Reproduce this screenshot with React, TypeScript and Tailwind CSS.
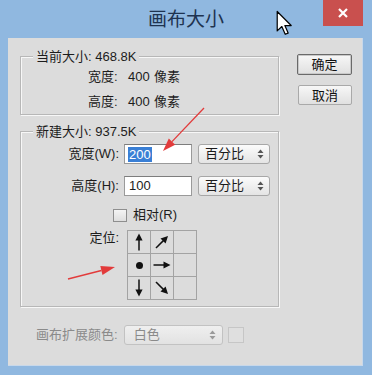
import React from 'react';

const font = "font-['Liberation_Sans','Noto_Sans_CJK_SC',sans-serif]";

function UpDown({ color = '#555' }: { color?: string }) {
  return (
    <svg width="7" height="10" viewBox="0 0 7 10">
      <polygon points="3.5,0.5 6.5,4 0.5,4" fill={color} />
      <polygon points="3.5,9.5 6.5,6 0.5,6" fill={color} />
    </svg>
  );
}

function Arrow({ rot }: { rot: number }) {
  return (
    <svg width="22" height="22" viewBox="0 0 22 22">
      <g transform={`rotate(${rot} 11 11)`}>
        <line x1="11" y1="19.5" x2="11" y2="8" stroke="#111" strokeWidth="1.5" />
        <polygon points="11,2.5 7.4,9.5 14.6,9.5" fill="#111" />
      </g>
    </svg>
  );
}

function Select({ label, w }: { label: string; w: string }) {
  return (
    <div
      className={`${w} h-[20px] flex items-center justify-between pl-[6px] pr-[5px] rounded-[3px] border border-[#a7a7a7] bg-gradient-to-b from-[#fbfbfb] to-[#e4e4e4] text-[13px] text-[#1a1a1a]`}
    >
      <span>{label}</span>
      <UpDown />
    </div>
  );
}

function Group({ legend, h, children }: { legend: string; h: string; children: React.ReactNode }) {
  return (
    <div
      className={`relative ${h} border border-[#b7b7b7] shadow-[inset_1px_1px_0_#f7f7f7,1px_1px_0_#f7f7f7]`}
    >
      <span className="absolute -top-[8px] left-[12px] px-[3px] bg-[#dcdcdc] text-[13px] leading-[16px] text-[#1c1c1c]">
        {legend}
      </span>
      {children}
    </div>
  );
}

export default function App() {
  const cells: (number | 'dot' | null)[] = [0, 45, null, 'dot', 90, null, 180, 135, null];

  return (
    <div className={`relative w-[372px] h-[375px] bg-[#90b8e0] flex flex-col ${font}`}>
      {/* Title bar */}
      <div className="h-[38px] flex items-center justify-center">
        <span className="text-[19px] text-[#1e3350] mt-[3px]">画布大小</span>
      </div>
      <div className="absolute right-[9px] top-0 w-[40px] h-[26px] bg-[#c9504e] flex items-center justify-center">
        <svg width="10" height="10" viewBox="0 0 10 10">
          <path d="M1 1L9 9M9 1L1 9" stroke="#fff" strokeWidth="2.2" />
        </svg>
      </div>

      {/* Client area */}
      <div className="ml-[8px] w-[355px] h-[328px] bg-[#dcdcdc] border-r border-b border-[#c8d8ea] flex pt-[16px] pl-[12px] text-[13px] text-[#1c1c1c]">
        {/* Left column */}
        <div className="w-[259px] pt-[2px] flex flex-col">
          <Group legend="当前大小: 468.8K" h="h-[59px]">
            <div className="pt-[10px] pl-[67px] flex flex-col gap-[5px]">
              <div className="h-[20px] flex items-center">
                <span className="w-[40px]">宽度:</span>
                <span className="w-[26px]">400</span>
                <span>像素</span>
              </div>
              <div className="h-[20px] flex items-center">
                <span className="w-[40px]">高度:</span>
                <span className="w-[26px]">400</span>
                <span>像素</span>
              </div>
            </div>
          </Group>

          <div className="mt-[16px]">
            <Group legend="新建大小: 937.5K" h="h-[176px]">
              <div className="pt-[12px] flex flex-col">
                <div className="h-[20px] flex items-center">
                  <span className="w-[98px] text-right">宽度(W):</span>
                  <div className="ml-[5px] w-[68px] h-[20px] border border-[#9a9a9a] border-t-[#7d7d7d] bg-white flex items-center pl-[3px]">
                    <span className="bg-[#3a7fd5] text-white leading-[15px] px-[1px]">200</span>
                  </div>
                  <div className="ml-[6px]">
                    <Select label="百分比" w="w-[72px]" />
                  </div>
                </div>
                <div className="mt-[12px] h-[20px] flex items-center">
                  <span className="w-[98px] text-right">高度(H):</span>
                  <div className="ml-[5px] w-[68px] h-[20px] border border-[#9a9a9a] border-t-[#7d7d7d] bg-white flex items-center pl-[4px]">
                    100
                  </div>
                  <div className="ml-[6px]">
                    <Select label="百分比" w="w-[72px]" />
                  </div>
                </div>
                <div className="mt-[12px] h-[14px] flex items-center">
                  <div className="ml-[92px] w-[14px] h-[13px] border border-[#8e8e8e] bg-gradient-to-b from-[#f4f4f4] to-[#dedede]" />
                  <span className="ml-[6px]">相对(R)</span>
                </div>
                <div className="mt-[8px] flex items-start">
                  <span className="w-[98px] text-right leading-[16px]">定位:</span>
                  <div className="ml-[8px] grid grid-cols-[repeat(3,22px)] grid-rows-[repeat(3,22px)] gap-px p-px bg-[#a3a3a3]">
                    {cells.map((c, i) => (
                      <div key={i} className="bg-[#dcdcdc] flex items-center justify-center">
                        {c === 'dot' ? (
                          <div className="w-[7px] h-[7px] rounded-full bg-[#111]" />
                        ) : c !== null ? (
                          <Arrow rot={c} />
                        ) : null}
                      </div>
                    ))}
                  </div>
                </div>
              </div>
            </Group>
          </div>

          {/* Canvas extension colour */}
          <div className="mt-[18px] pl-[16px] h-[20px] flex items-center text-[#8a8a8a]">
            <span>画布扩展颜色:</span>
            <div className="ml-[6px] w-[99px] h-[20px] flex items-center justify-between pl-[9px] pr-[6px] rounded-[3px] border border-[#c2c2c2] bg-gradient-to-b from-[#efefef] to-[#e2e2e2]">
              <span>白色</span>
              <UpDown color="#9a9a9a" />
            </div>
            <div className="ml-[5px] w-[16px] h-[16px] border border-[#c6c6c6] bg-[#dfdfdf]" />
          </div>
        </div>

        {/* Right column */}
        <div className="ml-[18px] flex flex-col">
          <button className="w-[55px] h-[21px] border border-[#6a6a6a] rounded-[2px] shadow-[inset_0_0_0_1px_#c9c9c9] bg-gradient-to-b from-[#f7f7f7] to-[#e0e0e0] text-[13px] text-[#111] leading-none">
            确定
          </button>
          <button className="mt-[10px] ml-[1px] w-[54px] h-[20px] border border-[#a9a9a9] rounded-[2px] bg-gradient-to-b from-[#f7f7f7] to-[#e0e0e0] text-[13px] text-[#111] leading-none">
            取消
          </button>
        </div>
      </div>

      {/* Mouse cursor */}
      <svg className="absolute left-[276px] top-[10px]" width="17" height="26" viewBox="0 0 14 21">
        <path d="M1 1L1 17L4.8 13.4L7.6 19.8L10 18.8L7.3 12.6L12.5 12.6Z" fill="#fff" stroke="#000" strokeWidth="1" strokeLinejoin="round" />
      </svg>

      {/* Red annotation arrows */}
      <svg className="absolute left-0 top-0 pointer-events-none" width="372" height="375" viewBox="0 0 372 375">
        <line x1="204" y1="108" x2="172" y2="141.6" stroke="#e23b3b" strokeWidth="1.3" />
        <polygon points="163,151 175.2,144.7 168.8,138.5" fill="#e23b3b" />
        <line x1="68" y1="279" x2="101.4" y2="270.5" stroke="#e23b3b" strokeWidth="1.3" />
        <polygon points="115,267 102.5,274.9 100.3,266.1" fill="#e23b3b" />
      </svg>
    </div>
  );
}
